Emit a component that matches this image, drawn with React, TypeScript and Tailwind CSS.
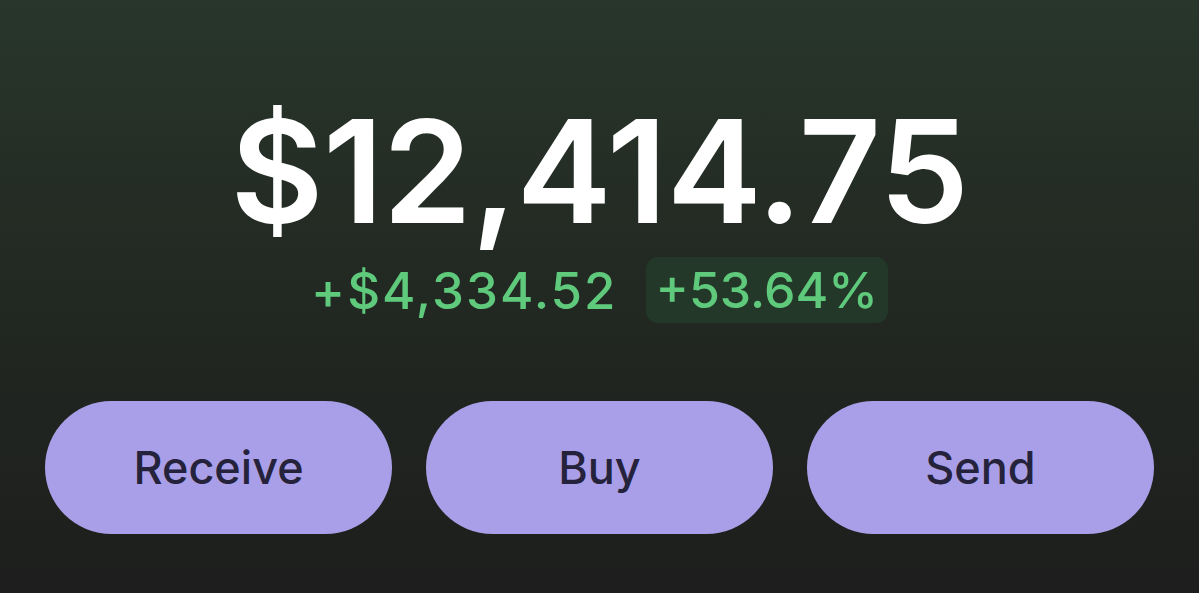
import { useState } from 'react';

const actions = ['Receive', 'Buy', 'Send'];

function App() {
  const [active, setActive] = useState<string | null>(null);

  return (
    <div
      className="flex h-[593px] w-full flex-col items-center overflow-hidden bg-gradient-to-b from-[#28362b] via-[#222822] to-[#1d1e1d] pt-[99px] text-white"
      style={{ fontFamily: 'Inter, "Noto Sans", sans-serif' }}
    >
      {/* balance */}
      <h1 className="text-[143px] font-semibold leading-none tracking-[-0.5px]">$12,414.75</h1>

      {/* change today */}
      <div className="mt-[15px] flex items-center gap-[28px]">
        <span className="text-[51px] font-medium leading-none tracking-[2px] text-[#5fc97c]">+$4,334.52</span>
        <span className="rounded-[12px] bg-[#233829] px-[10px] py-[8px] text-[50px] font-medium leading-none text-[#5fc97c]">
          +53.64%
        </span>
      </div>

      {/* action buttons */}
      <div className="mt-[78px] grid w-full grid-cols-3 gap-[34px] px-[45px]">
        {actions.map((label) => (
          <button
            key={label}
            onClick={() => setActive(label)}
            className={`flex h-[133px] items-center justify-center rounded-full bg-[#a99fe8] text-[45px] font-medium text-[#25223b] ${
              active === label ? 'brightness-110' : ''
            }`}
          >
            {label}
          </button>
        ))}
      </div>
    </div>
  );
}

export default App;
